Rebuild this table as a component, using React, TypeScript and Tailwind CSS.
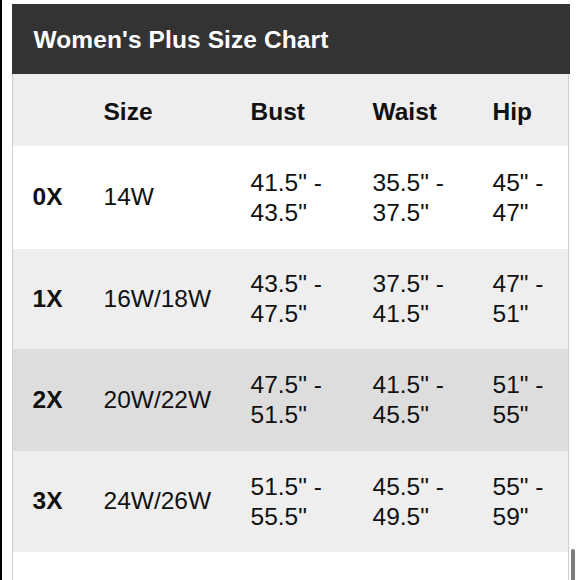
const rows = [
  { size: '0X', w: '14W', bust: ['41.5" -', '43.5"'], waist: ['35.5" -', '37.5"'], hip: ['45" -', '47"'], bg: 'bg-white', h: 'h-[103px]' },
  { size: '1X', w: '16W/18W', bust: ['43.5" -', '47.5"'], waist: ['37.5" -', '41.5"'], hip: ['47" -', '51"'], bg: 'bg-[#eeeeee]', h: 'h-[100px]' },
  { size: '2X', w: '20W/22W', bust: ['47.5" -', '51.5"'], waist: ['41.5" -', '45.5"'], hip: ['51" -', '55"'], bg: 'bg-[#dddddd]', h: 'h-[102px]' },
  { size: '3X', w: '24W/26W', bust: ['51.5" -', '55.5"'], waist: ['45.5" -', '49.5"'], hip: ['55" -', '59"'], bg: 'bg-[#eeeeee]', h: 'h-[101px]' },
  { size: '4X', w: '28W/30W', bust: ['55.5" -', '59.5"'], waist: ['49.5" -', '53.5"'], hip: ['59" -', '63"'], bg: 'bg-white', h: 'h-[101px] pt-[4px]' },
]

function Lines({ v }: { v: string[] }) {
  return (
    <div className="flex flex-col leading-[30px]">
      <span>{v[0]}</span>
      <span>{v[1]}</span>
    </div>
  )
}

export default function App() {
  return (
    <div className="w-[580px] h-[580px] bg-white overflow-hidden relative flex font-['Liberation_Sans',Arial,sans-serif] text-[#111]">
      <div className="w-[2px] h-full bg-black shrink-0" />
      <div className="pl-[10px] pt-[4px] w-[567px] shrink-0">
        <div className="border-x-[1.5px] border-[#cfcfcf]">
          <div className="h-[70px] bg-[#333333] flex items-center -mx-[1.5px] pl-[22px] pt-[2px]">
            <span className="text-white font-bold text-[24.5px] tracking-[0.1px]">Women's Plus Size Chart</span>
          </div>
          <div className="h-[72px] bg-[#eeeeee] flex items-center pl-[19.5px] pt-[4px] font-bold text-[24.5px]">
            <div className="w-[71px]" />
            <div className="w-[147px]">Size</div>
            <div className="w-[122px]">Bust</div>
            <div className="w-[120px]">Waist</div>
            <div>Hip</div>
          </div>
          {rows.map((r) => (
            <div key={r.size} className={`${r.h} flex items-center pl-[19.5px] text-[24.5px] ${r.bg}`}>
              <div className="w-[71px] font-bold">{r.size}</div>
              <div className="w-[147px]">{r.w}</div>
              <div className="w-[122px]"><Lines v={r.bust} /></div>
              <div className="w-[120px]"><Lines v={r.waist} /></div>
              <div><Lines v={r.hip} /></div>
            </div>
          ))}
        </div>
      </div>
      <div className="absolute left-[571px] top-[549px] w-[4px] h-[40px] rounded-full bg-[#7d7d7d]" />
    </div>
  )
}
